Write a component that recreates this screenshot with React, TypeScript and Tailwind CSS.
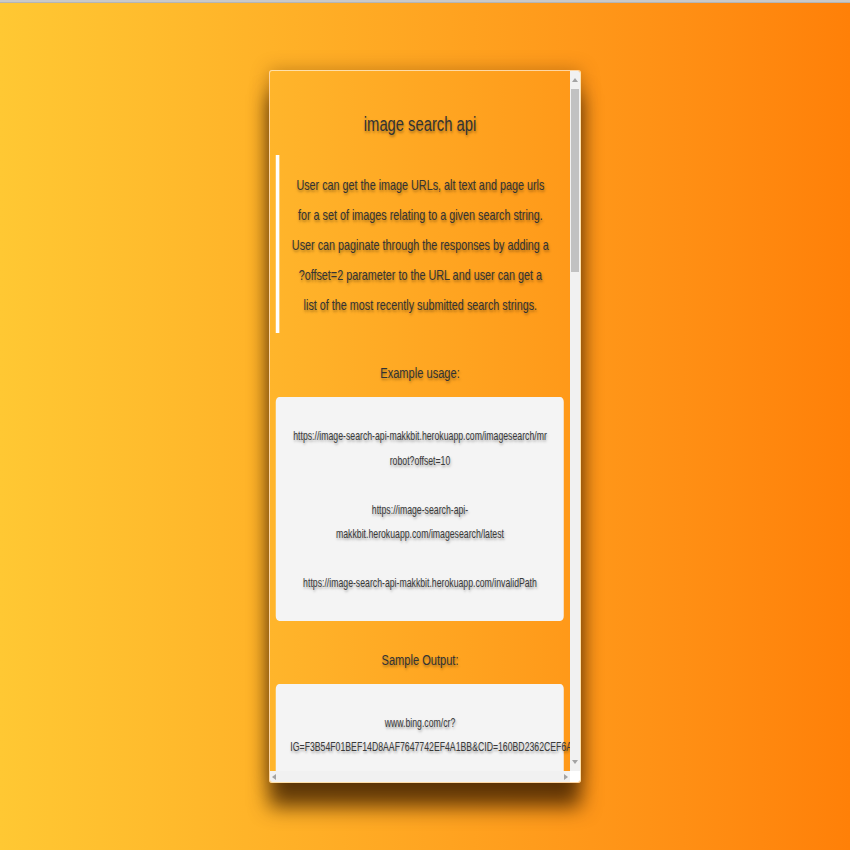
import React from 'react';

const font = "font-['Liberation_Sans',Arial,sans-serif]";
const shadow = '[text-shadow:1px_2px_3px_rgba(0,0,0,0.35)]';

const usage = [
  'https://image-search-api-makkbit.herokuapp.com/imagesearch/mr robot?offset=10',
  'https://image-search-api-makkbit.herokuapp.com/imagesearch/latest',
  'https://image-search-api-makkbit.herokuapp.com/invalidPath',
];

const output = [
  'www.bing.com/cr?IG=F3B54F01BEF14D8AAF7647742EF4A1BB&CID=160BD2362CEF6A1B3A8E2F4C8D9E7F21',
];

const CodeBox: React.FC<{ lines: string[] }> = ({ lines }) => (
  <div className="bg-[#f4f4f4] rounded-[5px] pt-[27px] pb-[25px] px-[20px] flex flex-col gap-[24.5px]">
    {lines.map((l) => (
      <p key={l} className={`text-[12.1px] leading-[24.5px] text-center text-[#3a3a3a] ${shadow}`}>
        {l}
      </p>
    ))}
  </div>
);

const Arrow: React.FC<{ dir: 'up' | 'down' | 'left' | 'right' }> = ({ dir }) => {
  const pts = {
    up: '0,4 3,0 6,4',
    down: '0,0 6,0 3,4',
    left: '4,0 4,6 0,3',
    right: '0,0 0,6 4,3',
  }[dir];
  const vertical = dir === 'up' || dir === 'down';
  return (
    <svg width={vertical ? 6 : 4} height={vertical ? 4 : 6} viewBox={vertical ? '0 0 6 4' : '0 0 4 6'}>
      <polygon points={pts} fill="#a3a3a3" />
    </svg>
  );
};

export default function App() {
  return (
    <div className={`min-h-screen bg-linear-to-r from-[#ffc833] to-[#ff8008] ${font}`}>
      <div className="h-[3px] bg-[#c9c9c9] border-b border-[#b5b5b5]" />
      <div className="pt-[67px] pb-[67px]">
        <div className="mx-auto w-[312px] border border-white/60 rounded-[3px] bg-linear-to-r from-[#ffb52b] to-[#ff9818] shadow-[0_24px_20px_rgba(60,30,0,0.8),0_0_18px_rgba(80,40,0,0.35)] overflow-hidden">
          <div className="flex h-[700px]">
            {/* page content is rendered condensed, like the squeezed original */}
            <div className="w-[300px] overflow-hidden">
              <div className="w-[416.7px] shrink-0 px-[8.3px] origin-left scale-x-[0.72] text-[#333]">
                <h1 className={`mt-[41px] text-[20.5px] leading-[24px] text-center ${shadow}`}>image search api</h1>
                <blockquote className="mt-[19px] border-l-[5px] border-white pl-[16px] pr-[20px] pt-[15px] pb-[13px]">
                  <p className={`text-[15px] leading-[30px] text-center ${shadow}`}>
                    User can get the image URLs, alt text and page urls for a set of images relating to a given search string. User can paginate through the responses by adding a ?offset=2 parameter to the URL and user can get a list of the most recently submitted search strings.
                  </p>
                </blockquote>
                <h2 className={`mt-[30px] text-[15.4px] leading-[20px] text-center ${shadow}`}>Example usage:</h2>
                <div className="mt-[14px]">
                  <CodeBox lines={usage} />
                </div>
                <h2 className={`mt-[29px] text-[15.4px] leading-[20px] text-center ${shadow}`}>Sample Output:</h2>
                <div className="mt-[14px]">
                  <CodeBox lines={output} />
                </div>
              </div>
            </div>
            <div className="w-[10px] bg-[#f1f1f1] flex flex-col items-center">
              <div className="h-[18px] flex items-center justify-center"><Arrow dir="up" /></div>
              <div className="w-[8px] h-[183px] bg-[#c1c1c1]" />
              <div className="flex-1" />
              <div className="h-[18px] flex items-center justify-center"><Arrow dir="down" /></div>
            </div>
          </div>
          <div className="flex h-[11px]">
            <div className="w-[300px] bg-[#f1f1f1] flex items-center justify-between px-[2px]">
              <Arrow dir="left" />
              <Arrow dir="right" />
            </div>
            <div className="w-[10px] bg-white" />
          </div>
        </div>
      </div>
    </div>
  );
}
